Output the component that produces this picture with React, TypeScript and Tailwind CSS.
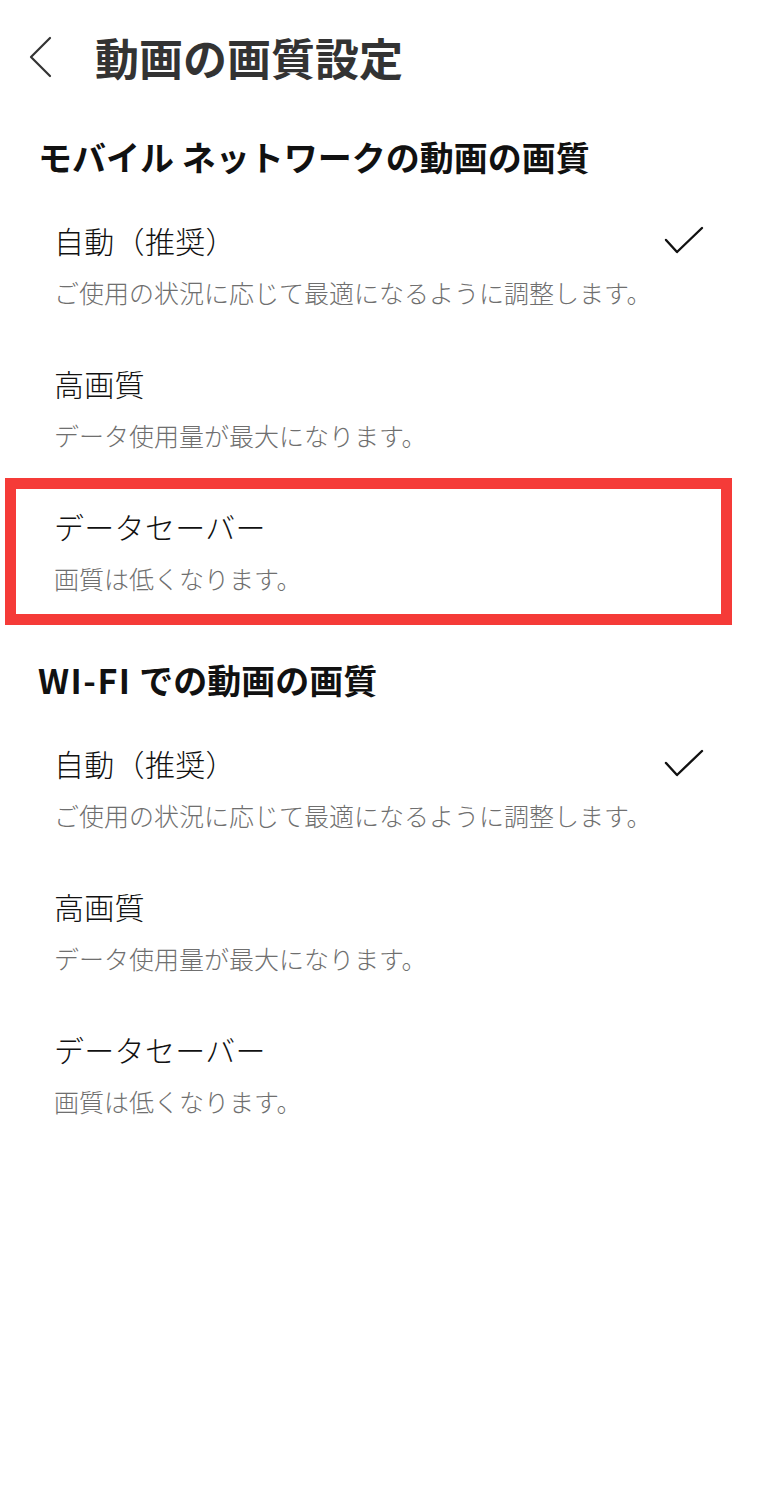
import { Fragment } from 'react';

type Option = {
  title: string;
  description: string;
  selected?: boolean;
  highlighted?: boolean;
};

const sections: { heading: string; options: Option[] }[] = [
  {
    heading: 'モバイル ネットワークの動画の画質',
    options: [
      { title: '自動（推奨）', description: 'ご使用の状況に応じて最適になるように調整します。', selected: true },
      { title: '高画質', description: 'データ使用量が最大になります。' },
      { title: 'データセーバー', description: '画質は低くなります。', highlighted: true },
    ],
  },
  {
    heading: 'WI-FI での動画の画質',
    options: [
      { title: '自動（推奨）', description: 'ご使用の状況に応じて最適になるように調整します。', selected: true },
      { title: '高画質', description: 'データ使用量が最大になります。' },
      { title: 'データセーバー', description: '画質は低くなります。' },
    ],
  },
];

function Check() {
  return (
    <svg width="40" height="30" viewBox="0 0 40 30" fill="none" className="shrink-0">
      <polyline points="2,14 13,26 38,2" stroke="#111" strokeWidth="2.4" strokeLinecap="round" strokeLinejoin="round" />
    </svg>
  );
}

function OptionRow({ option }: { option: Option }) {
  return (
    <div className="relative flex h-[143px] items-start justify-between pt-[28px] pr-[56px] pl-[54px]">
      <div className="flex flex-col gap-[16px]">
        <p className="text-[30px] leading-[40px] font-light tracking-[0.3px] text-[#111]">{option.title}</p>
        <p className="text-[25px] leading-[32px] font-light text-[#6f6f6f]">{option.description}</p>
      </div>
      {option.selected && (
        <div className="mt-[6px]">
          <Check />
        </div>
      )}
      {option.highlighted && (
        <span className="pointer-events-none absolute top-0 -bottom-[4px] left-[5px] w-[727px] border-[11px] border-[#f53b38]" />
      )}
    </div>
  );
}

export default function App() {
  return (
    <main
      className="min-h-[1500px] w-[760px] bg-white"
      style={{ fontFamily: '"Noto Sans CJK JP", "Noto Sans", sans-serif' }}
    >
      <header className="flex h-[98px] items-start pt-[35px] pl-[28px]">
        <svg width="24" height="44" viewBox="0 0 24 44" fill="none" className="shrink-0">
          <polyline points="22,3 3,22 22,41" stroke="#333" strokeWidth="2.2" strokeLinecap="round" strokeLinejoin="round" />
        </svg>
        <h1 className="ml-[43px] text-[44px] leading-[44px] font-bold text-[#333]">動画の画質設定</h1>
      </header>

      {sections.map((section) => (
        <Fragment key={section.heading}>
          <section className="pt-[37px]">
            <h2 className="mb-[13px] pl-[38px] text-[34px] leading-[44px] font-bold text-[#111]">
              {section.heading.startsWith('WI-FI') ? (
                <>
                  <span className="tracking-[1.5px]">WI-FI</span>
                  {section.heading.slice(5)}
                </>
              ) : (
                section.heading
              )}
            </h2>
            {section.options.map((option) => (
              <OptionRow key={option.title} option={option} />
            ))}
          </section>
        </Fragment>
      ))}
    </main>
  );
}
